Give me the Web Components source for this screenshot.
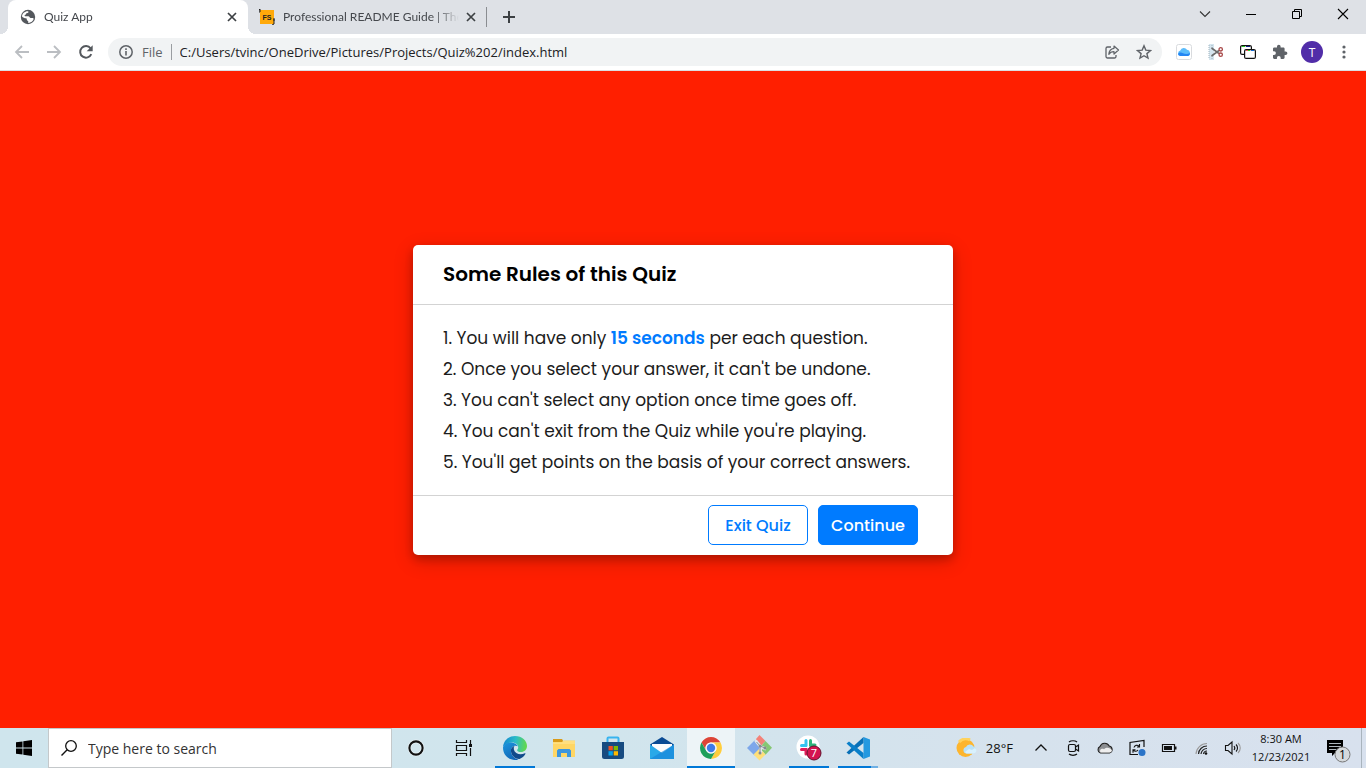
<!DOCTYPE html>
<html lang="en">
<head>
<meta charset="utf-8">
<title>Quiz App</title>
<style>
  html, body { margin: 0; height: 100%; }
  body { font-family: "Open Sans", "Noto Sans", sans-serif; font-size: 12px; color: #202124; }
</style>
</head>
<body>
<desktop-screen>
  <tab-strip slot="top">
    <browser-tab active label="Quiz App"><ui-icon slot="icon" name="globe"></ui-icon></browser-tab>
    <browser-tab label="Professional README Guide | The"><ui-icon slot="icon" name="fs"></ui-icon></browser-tab>
  </tab-strip>
  <browser-toolbar slot="top" url="C:/Users/tvinc/OneDrive/Pictures/Projects/Quiz%202/index.html"></browser-toolbar>
  <rules-dialog heading="Some Rules of this Quiz">
    <rule-line>1. You will have only <strong>15 seconds</strong> per each question.</rule-line>
    <rule-line>2. Once you select your answer, it can't be undone.</rule-line>
    <rule-line>3. You can't select any option once time goes off.</rule-line>
    <rule-line>4. You can't exit from the Quiz while you're playing.</rule-line>
    <rule-line>5. You'll get points on the basis of your correct answers.</rule-line>
    <quiz-button slot="actions">Exit Quiz</quiz-button>
    <quiz-button slot="actions" primary>Continue</quiz-button>
  </rules-dialog>
  <task-bar slot="bottom"></task-bar>
</desktop-screen>

<script>
const svg = (w, h, body, attrs = '') =>
  `<svg width="${w}" height="${h}" viewBox="0 0 ${w} ${h}" fill="none" aria-hidden="true" ${attrs}>${body}</svg>`;

const ICONS = {
  globe: svg(16, 16, '<circle cx="8" cy="8" r="7.2" fill="#54585d"/><path d="M8.2 2.2C9 3.600 7.700 4 6.500 4.300 5.900 4.500 6.400 5.600 5.200 5.800 4.300 6 4.500 7.200 5.200 7.300H8.300C9.600 7.300 9.300 8.900 10.500 8.900H12.800C14 8.900 13.700 10.500 12.700 11.800 11.500 13.300 9.600 14 8.100 13.900 8.900 12.700 8 12 7.300 11.500 6.300 10.800 7.300 9.500 6 9.300 4.700 9.200 2.800 8.600 2 7.500 2.100 4.500 4.800 2 8.200 2.200Z" fill="#fff"/>'),
  fs: svg(16, 16, '<path d="M1 1h14v14H1z" fill="#ffa90a"/><path d="M1 0v3M1 0l-1 1v3M15 10v5l-2 1M15 9v3" stroke="#222"/><text x="8" y="11" font-family="Liberation Sans" font-size="7" font-weight="700" text-anchor="middle" fill="#222">FS</text>'),
  close: svg(16, 16, '<path d="M4 4l8 8M12 4l-8 8" stroke="#3c4043" stroke-width="1.700"/>'),
  plus: svg(16, 16, '<path d="M8 2v12M2 8h12" stroke="#3c4043" stroke-width="2"/>'),
  down: svg(16, 16, '<path d="M3 5.500l5 5 5-5" stroke="#333" stroke-width="1.100"/>'),
  min: svg(16, 16, '<path d="M3 8.500h10" stroke="#000"/>'),
  restore: svg(16, 16, '<path d="M3.500 5.500h7v7h-7zM5.500 5.500v-2h7v7h-2" stroke="#000"/>'),
  exit: svg(16, 16, '<path d="M3 3l10 10M13 3L3 13" stroke="#000" stroke-width="1.100"/>'),
  back: svg(16, 16, '<path d="M15 8H2.500M8 2L2 8l6 6" stroke="#bbbec2" stroke-width="1.800"/>'),
  forward: svg(16, 16, '<path d="M1 8h12.500M8 2l6 6-6 6" stroke="#bbbec2" stroke-width="1.800"/>'),
  reload: svg(16, 16, '<path d="M13.300 10.200A5.800 5.800 0 1 1 12.600 4.300" stroke="#54585d" stroke-width="2"/><path d="M14.700 1.300v6H8.700z" fill="#54585d"/>'),
  info: svg(16, 16, '<circle cx="8" cy="8" r="6.200" stroke="#5f6368" stroke-width="1.500"/><path d="M8 7v4.500M8 4.300v1.600" stroke="#5f6368" stroke-width="1.600"/>'),
  share: svg(16, 16, '<path d="M7 3H3.500a1.500 1.500 0 0 0-1.500 1.500v8A1.500 1.500 0 0 0 3.500 14h7a1.500 1.500 0 0 0 1.500-1.500V11" stroke="#5f6368" stroke-width="1.300"/><path d="M10 2l4.500 4L10 10V7.700C7.500 7.700 6 8.500 4.800 10.300 5 7 6.800 4.700 10 4.300z" stroke="#5f6368" stroke-width="1.200" stroke-linejoin="round"/>'),
  star: svg(16, 16, '<path d="M8 1.800l1.800 4.300 4.700.4-3.600 3.100 1.100 4.500L8 11.700l-4 2.400 1.100-4.500L1.500 6.500l4.700-.4z" stroke="#5f6368" stroke-width="1.400"/>'),
  cloud: svg(16, 16, '<rect x=".5" y=".5" width="15" height="15" rx="2" fill="#fff" stroke="#d9dbde"/><path d="M4.500 12a2.800 2.800 0 0 1-.2-5.500A3.800 3.800 0 0 1 11 5.800a3.200 3.200 0 0 1 .9 6.200z" fill="#5bbcfb"/><path d="M2 10c1-1.500 3-1.800 5-.8 2 1 4.500 1.300 7-.2 0 1.800-1 3-2.200 3H4.500C3.200 12 2.200 11.200 2 10z" fill="#2486f3"/>'),
  scissors: svg(16, 16, '<path d="M1 0h5v16H1z" fill="#d5e5ee"/><path d="M1 1v14M4 1v3M4 12v3" stroke="#9fb3be" stroke-dasharray="1 1"/><path d="M3.500 4L11 9.500M3.500 12L11 6.500" stroke="#6b6b6b" stroke-width="1.600"/><circle cx="12.700" cy="5.300" r="1.700" stroke="#a84747" stroke-width="1.300"/><circle cx="12.700" cy="10.700" r="1.700" stroke="#a84747" stroke-width="1.300"/>'),
  windows2: svg(16, 16, '<rect x=".6" y="1.600" width="10.800" height="8.800" rx="1.500" fill="#fff" stroke="#111" stroke-width="1.200"/><path d="M2 2.500h3" stroke="#2c2"/><path d="M6 2.500h4" stroke="#128"/><rect x="4.600" y="5.600" width="10.800" height="8.800" rx="1.500" fill="#fff" stroke="#111" stroke-width="1.200"/><path d="M6 6.500h2" stroke="#e55"/><path d="M8 6.500h2" stroke="#2c2"/><path d="M11 6.500h3" stroke="#16c"/>'),
  puzzle: svg(16, 16, '<path d="M13.600 7.500h-1V4.700c0-.8-.6-1.300-1.300-1.300H8.600V2.600a1.800 1.800 0 0 0-3.600 0v.8H2.300C1.500 3.400 1 4 1 4.700v2.500h1a1.900 1.900 0 0 1 0 3.800H1v2.600c0 .8.600 1.400 1.300 1.400h2.600v-1a1.900 1.900 0 0 1 3.800 0v1h2.600c.7 0 1.300-.6 1.300-1.400v-2.500h1a1.800 1.800 0 0 0 0-3.600z" fill="#5f6368"/>'),
  dots: svg(16, 16, '<g fill="#5f6368"><circle cx="8" cy="3" r="1.600"/><circle cx="8" cy="8" r="1.600"/><circle cx="8" cy="13" r="1.600"/></g>'),
  start: svg(16, 16, '<path d="M0 2.300L6.500 1.400v6.100H0zM7.300 1.300L16 0v7.500H7.300zM0 8.400h6.500v6.200L0 13.700zM7.300 8.400H16V16l-8.700-1.300z" fill="#000"/>'),
  search: svg(18, 18, '<circle cx="11" cy="7" r="5.300" stroke="#111" stroke-width="1.300"/><path d="M7.200 10.800L1.500 16.500" stroke="#111" stroke-width="1.400"/>'),
  cortana: svg(18, 18, '<circle cx="9" cy="9" r="6.600" stroke="#fff" stroke-width="3.600" opacity=".5"/><circle cx="9" cy="9" r="6.600" stroke="#111" stroke-width="2.100"/>'),
  taskview: svg(18, 18, '<path d="M1.500 1v2.500h10V1M1.500 17v-2.500h10V17M1.500 6.500h10v5h-10zM15.500 1v4M15.500 9v8" stroke="#111" stroke-width="1.200"/><path d="M14 5h3v3h-3z" fill="#111"/>'),
  edge: svg(24, 24, '<defs><linearGradient id="a" x1="1" y1="7" x2="23" y2="10" gradientUnits="userSpaceOnUse"><stop stop-color="#168ccf"/><stop offset=".5" stop-color="#2bbcc8"/><stop offset="1" stop-color="#62d84e"/></linearGradient><linearGradient id="b" x1="3" y1="8" x2="12" y2="24" gradientUnits="userSpaceOnUse"><stop stop-color="#1a8fd8"/><stop offset="1" stop-color="#1164b4"/></linearGradient></defs><path d="M0 11C.6 4.500 5.800 0 12 0c7 0 12 4.700 12 10 0 3.800-2.800 6-6 6-2.600 0-4-.9-3.800-2 .2-.7 1-1.200 1-2.600C15.200 9 13 6.500 9 6.500 4.500 6.500 1 8.700 0 11z" fill="url(#a)"/><path d="M0 11.500C.7 8.500 4.500 6.300 8.500 6.500c3.200.2 5.500 1.800 6.400 3.800-1-.6-2.200-.8-3.400-.5C9 10.500 8 12.700 8 14.700c0 4.500 3.500 7.900 7.500 8.700-1.100.4-2.300.6-3.500.6C5 24 0 18.500 0 11.500z" fill="url(#b)"/><path d="M11.500 9.800C9 10.600 7.600 13 8 15.500c.5 4.300 4.500 7.800 8.500 7.500 2.600-1 4.700-2.800 6-5.200.2-.5-.2-.8-.7-.5-2.800 1.400-6 1.400-8.500-.3-2.600-1.800-3.300-5-1.800-7.200z" fill="#114a8b"/>'),
  explorer: svg(22, 20, '<path d="M0 1h9l1 1.500V5H0z" fill="#d99a18"/><path d="M0 4h9l1.500-1.500H22V19H0z" fill="#ffd664"/><path d="M0 4.500h9L10.500 3H22v3H0z" fill="#ffdf80"/><path d="M4 19v-6.500L5.500 11h11l1.500 1.500V19h-4v-4H8v4z" fill="#3d96dd"/>'),
  store: svg(24, 24, '<path d="M6.500 7V2.500a1 1 0 0 1 1-1h9a1 1 0 0 1 1 1V7" stroke="#38b4ef" stroke-width="2"/><path d="M1 6h22v14.500a2.500 2.500 0 0 1-2.500 2.500h-17A2.500 2.500 0 0 1 1 20.500z" fill="#174b80"/><path d="M7.500 10h4.300v4.300H7.500z" fill="#f25022"/><path d="M12.700 10H17v4.300h-4.300z" fill="#7fba00"/><path d="M7.500 15.200h4.300v4.300H7.500z" fill="#00a4ef"/><path d="M12.700 15.200H17v4.300h-4.300z" fill="#ffb900"/>'),
  mail: svg(24, 24, '<path d="M0 8.500L12 1l12 7.500L22 11H2z" fill="#0a4b94"/><path d="M2 8h20v8H2z" fill="#fbfcfd"/><path d="M0 8.500l12 8.500 12-8.500V23H0z" fill="#2aa9e8"/><path d="M0 23L24 8.500V23z" fill="#1784d8" opacity=".65"/>'),
  chrome: svg(24, 24, '<circle cx="12" cy="12" r="11" fill="#fff"/><path d="M2.500 6.500A11 11 0 0 1 21.500 6.500H12A5.500 5.500 0 0 0 7.200 14.700z" fill="#dc4437"/><path d="M21.500 6.500A11 11 0 0 1 12 23l4.800-8.300A5.500 5.500 0 0 0 12 6.500z" fill="#fecd3e"/><path d="M12 23A11 11 0 0 1 2.500 6.500l4.700 8.200a5.500 5.500 0 0 0 9.600 0z" fill="#1e9f5b"/><circle cx="12" cy="12" r="5.500" fill="#f4f6fa"/><circle cx="12" cy="12" r="4.200" fill="#3f7be8"/>'),
  git: svg(26, 26, '<path d="M12.500 0l6 6-6 6.500L9 9V4z" fill="#f48178"/><path d="M0 13l7.500-7.500L14 12.500 7.500 20.500z" fill="#7da7ea"/><path d="M18.500 6l6.500 6.700-6.500 7-6-7z" fill="#86c774"/><path d="M12.500 13.500l6 6-6 6-6-6z" fill="#ffdf78"/><path d="M8.500 5.500l5 6v7M14 12l5 2" stroke="#dfe6eb" stroke-width="3"/><path d="M9.500 7l3.500 4v7M13 11l5 2" stroke="#8b9197"/><g fill="#858a90"><circle cx="13" cy="11" r="1.500"/><circle cx="13" cy="18" r="1.500"/><circle cx="18" cy="13" r="1.500"/></g>'),
  slack: svg(26, 26, '<circle cx="12" cy="12" r="11.500" fill="#fff"/><g stroke-width="3" stroke-linecap="round"><path d="M10 5.500v5" stroke="#36c5f0"/><path d="M5.500 10.500h4" stroke="#36c5f0"/><path d="M14.500 5.500v5" stroke="#2eb67d"/><path d="M15 10h4" stroke="#2eb67d"/><path d="M5.500 14.500h4.500V19" stroke="#e01e5a"/><path d="M14.500 15v3.500" stroke="#ecb22e"/></g><circle cx="18" cy="18" r="7" fill="#d4144f" stroke="#63102b"/><text x="18" y="22" font-family="Open Sans" font-size="11" text-anchor="middle" fill="#fff">7</text>'),
  vscode: svg(24, 24, '<path d="M17.500 1L24 3.500v17L17.500 23z" fill="#2499e0"/><path d="M17.500 1v6L3 18.500.5 16.500z" fill="#0870b7"/><path d="M17.500 23v-6L3 5.500.5 7.500z" fill="#0a7fc9"/>'),
  weather: svg(22, 20, '<circle cx="9.500" cy="10" r="9" fill="#fdb52d"/><path d="M3 4a9 9 0 0 1 11-2" stroke="#ffd25d" stroke-width="3"/><path d="M10.500 15.500a3.300 3.300 0 0 1-.5-6.500 4.200 4.200 0 0 1 7.500-.5 3.600 3.600 0 0 1 0 7z" fill="#b9e2f8"/><path d="M9 14l4-3 3 1 3-2 1.500 2a3.600 3.600 0 0 1-3 3.500h-7z" fill="#d9f1fd"/>'),
  up: svg(16, 16, '<path d="M2.500 10.500L8 5l5.500 5.500" stroke="#111" stroke-width="1.300"/>'),
  meet: svg(16, 18, '<rect x="3.500" y="5.500" width="7" height="7" rx="1.500" stroke="#111" stroke-width="1.200"/><path d="M10.500 8l3-2v6l-3-2M4 3c2-1.700 6-1.700 8 0M4 15c2 1.700 6 1.700 8 0" stroke="#111" stroke-width="1.200"/>'),
  onedrive: svg(18, 16, '<path d="M4.500 13a3.500 3.500 0 0 1-.5-6.500A5 5 0 0 1 13.200 6 3.600 3.600 0 0 1 13.500 13z" fill="#8c8e91" stroke="#222" stroke-width="1.100"/><path d="M4.500 12.500C3 9.500 6 7.800 8 9.200c3-2.600 6.500-1 8 1.300-.4 1.300-1 2-2.500 2z" fill="#eee"/>'),
  sync: svg(18, 18, '<path d="M16 8V1.500L2 3.500v12h8" stroke="#111" stroke-width="1.200"/><path d="M6 8.500c.5-2.300 3.500-3 5-1.200M11.500 5v3h-2.500M10 11c-1 1.500-3 1.800-4.500.3M5 13.800v-3h2.500" stroke="#111" stroke-width="1.100"/><circle cx="14" cy="13.500" r="3.500" fill="#2b74c8"/>'),
  battery: svg(16, 16, '<path d="M1.500 4.500h12v7h-12z" stroke="#111" stroke-width="1.200"/><path d="M3 6h8v4H3zM14 6.500h1.500v3H14z" fill="#111"/>'),
  wifi: svg(16, 16, '<path d="M3 14A11 11 0 0 1 14 3.500" stroke="#999" stroke-width="1.100"/><path d="M5.500 14A8.500 8.500 0 0 1 14 6M8 14a6 6 0 0 1 6-5.500M10.500 14A3.500 3.500 0 0 1 14 11" stroke="#222" stroke-width="1.200"/><circle cx="13" cy="13.500" r="1.300" fill="#111"/>'),
  sound: svg(18, 16, '<path d="M1.500 5.500h2.500l4-3.500v12L4 10.500H1.500z" stroke="#111" stroke-width="1.100"/><path d="M10 6c1 1.200 1 2.800 0 4M12 4.500c2 2 2 5 0 7" stroke="#111" stroke-width="1.100"/><path d="M14 3c3 3 3 7 0 10" stroke="#999" stroke-width="1.100"/>'),
  notice: svg(28, 30, '<path d="M4 7h16v13h-8l-3 3v-3H4z" fill="#000"/><path d="M6 10.500h12M6 13.500h12M6 16.500h7" stroke="#dbe5ee" stroke-width=".8"/><circle cx="19.500" cy="21.500" r="7.500" fill="#d5d9dc" stroke="#777"/><text x="19.500" y="26" font-family="Open Sans" font-size="12" text-anchor="middle" fill="#000">1</text>')
};

const define = (name, html, setup) => {
  const template = document.createElement('template');
  template.innerHTML = html;
  customElements.define(name, class extends HTMLElement {
    constructor() {
      super();
      this.attachShadow({ mode: 'open' }).append(template.content.cloneNode(true));
    }
    connectedCallback() { if (setup) setup(this, this.shadowRoot); }
  });
};

define('ui-icon', `<style>:host { display: inline-flex; flex: none; } svg { display: block; }</style><span></span>`,
  (el, root) => { root.querySelector('span').innerHTML = ICONS[el.getAttribute('name')] || ''; });

define('icon-button', `
  <style>
    :host { display: flex; flex: none; width: 32px; height: 32px; }
    button { all: unset; flex: 1; display: flex; align-items: center; justify-content: center; }
  </style>
  <button type="button"><slot></slot></button>`,
  (el, root) => root.querySelector('button').setAttribute('aria-label', el.getAttribute('label') || ''));

define('desktop-screen', `
  <style>
    :host { display: flex; flex-direction: column; min-height: 100vh; background: #ff1f00; }
    header, footer { flex: none; }
    main { flex: 1; display: flex; align-items: center; justify-content: center; }
  </style>
  <header><slot name="top"></slot></header>
  <main><slot></slot></main>
  <footer><slot name="bottom"></slot></footer>`);

define('browser-tab', `
  <style>
    :host { display: flex; align-items: center; box-sizing: border-box; flex: 0 1 240px; min-width: 0; height: 34px; padding: 0 9px 0 11px; gap: 8px; color: #45484d; font-family: Lato, "Open Sans", sans-serif; }
    :host([active]) { position: relative; background: #fff; border-radius: 8px 8px 0 0; padding: 0 8px 0 12px; }
    :host([active])::before, :host([active])::after { content: ""; position: absolute; bottom: 0; width: 8px; height: 8px; }
    :host([active])::before { left: -8px; background: radial-gradient(circle at 0 0, #dee1e6 8px, #fff 8px); }
    :host([active])::after { right: -8px; background: radial-gradient(circle at 100% 0, #dee1e6 8px, #fff 8px); }
    span { flex: 1; overflow: hidden; white-space: nowrap; line-height: 20px; -webkit-mask-image: linear-gradient(to left, transparent, #000 24px); mask-image: linear-gradient(to left, transparent, #000 24px); }
    icon-button { width: 16px; height: 16px; }
    :host(:not([active])) span { margin-right: -4px; }
  </style>
  <slot name="icon"></slot><span></span>
  <icon-button label="Close tab"><ui-icon name="close"></ui-icon></icon-button>`,
  (el, root) => { root.querySelector('span').textContent = el.getAttribute('label'); });

define('tab-strip', `
  <style>
    :host { display: flex; height: 34px; padding-left: 8px; background: #dee1e6; }
    .new { display: flex; align-items: center; align-self: center; height: 20px; padding-left: 6px; margin-left: -2px; border-left: 1px solid #8a8d91; }
    .window { display: flex; margin-left: auto; }
    .window icon-button { width: 46px; height: 28px; }
  </style>
  <slot></slot>
  <div class="new"><icon-button label="New tab"><ui-icon name="plus"></ui-icon></icon-button></div>
  <div class="window">
    <icon-button label="Search tabs"><ui-icon name="down"></ui-icon></icon-button>
    <icon-button label="Minimize"><ui-icon name="min"></ui-icon></icon-button>
    <icon-button label="Restore"><ui-icon name="restore"></ui-icon></icon-button>
    <icon-button label="Close"><ui-icon name="exit"></ui-icon></icon-button>
  </div>`);

define('browser-toolbar', `
  <style>
    :host { display: flex; align-items: center; height: 36px; padding: 0 6px; background: #fff; border-bottom: 1px solid #dcdee1; }
    .address { flex: 1; display: flex; align-items: center; height: 28px; margin: 0 6px; padding: 0 2px 0 10px; border-radius: 14px; background: #f1f3f4; }
    label { display: flex; align-items: center; gap: 8px; font-size: 13px; line-height: 16px; color: #5f6368; }
    label::after { content: ""; width: 1px; height: 16px; background: #9a9da1; }
    input { flex: 1; min-width: 0; margin: 0; padding: 0 0 0 8px; border: 0; outline: 0; background: none; font: inherit; font-size: 13px; color: #202124; }
    .avatar { display: flex; align-items: center; justify-content: center; width: 22px; height: 22px; border-radius: 50%; background: #512da8; color: #fff; font-size: 12px; }
  </style>
  <icon-button label="Back"><ui-icon name="back"></ui-icon></icon-button>
  <icon-button label="Forward"><ui-icon name="forward"></ui-icon></icon-button>
  <icon-button label="Reload"><ui-icon name="reload"></ui-icon></icon-button>
  <div class="address">
    <label for="url"><ui-icon name="info"></ui-icon>File</label>
    <input id="url" type="text" spellcheck="false">
    <icon-button label="Share"><ui-icon name="share"></ui-icon></icon-button>
    <icon-button label="Bookmark"><ui-icon name="star"></ui-icon></icon-button>
  </div>
  <icon-button label="iCloud"><ui-icon name="cloud"></ui-icon></icon-button>
  <icon-button label="Clipper"><ui-icon name="scissors"></ui-icon></icon-button>
  <icon-button label="Windows"><ui-icon name="windows2"></ui-icon></icon-button>
  <icon-button label="Extensions"><ui-icon name="puzzle"></ui-icon></icon-button>
  <icon-button label="Profile"><span class="avatar">T</span></icon-button>
  <icon-button label="Menu"><ui-icon name="dots"></ui-icon></icon-button>`,
  (el, root) => { root.querySelector('input').value = el.getAttribute('url'); });

define('rule-line', `
  <style>
    :host { display: block; line-height: 31px; }
    ::slotted(strong) { font-weight: 600; color: #007bff; }
  </style>
  <slot></slot>`);

define('quiz-button', `
  <style>
    :host { display: flex; }
    button { width: 100px; height: 40px; padding: 0; border: 1px solid #007bff; border-radius: 5px; background: #fff; color: #007bff; font: inherit; font-size: 16px; font-weight: 500; white-space: nowrap; }
    :host([primary]) button { background: #007bff; color: #fff; }
  </style>
  <button type="button"><slot></slot></button>`);

define('rules-dialog', `
  <style>
    :host { display: block; width: 540px; max-width: 100%; border-radius: 5px; background: #fff; font-family: Poppins, Inter, sans-serif; font-size: 17px; color: #1c1c1c; box-shadow: 0 4px 8px rgba(0,0,0,.2), 0 6px 20px rgba(0,0,0,.19); }
    h1 { margin: 0; padding: 0 30px; border-bottom: 1px solid #d3d3d3; font-size: 20px; font-weight: 600; line-height: 59px; color: #000; }
    .rules { padding: 18px 30px 17px; }
    footer { display: flex; align-items: center; justify-content: flex-end; gap: 10px; height: 59px; padding: 0 35px; border-top: 1px solid #d3d3d3; }
  </style>
  <section aria-labelledby="title">
    <h1 id="title"></h1>
    <div class="rules"><slot></slot></div>
    <footer><slot name="actions"></slot></footer>
  </section>`,
  (el, root) => { root.querySelector('h1').textContent = el.getAttribute('heading'); });

define('task-button', `
  <style>
    :host { display: flex; flex: none; box-sizing: border-box; width: 48px; height: 40px; position: relative; }
    :host([current]) { background: #edf4f7; }
    button { all: unset; flex: 1; display: flex; align-items: center; justify-content: center; }
    :host([open])::after, :host([current])::after { content: ""; position: absolute; left: 4px; right: 4px; bottom: 0; height: 2px; background: #0078d7; }
    :host([current])::after { left: 0; right: 0; }
    :host([stacked])::after { background: linear-gradient(to left, #6fb0e4 7px, #0078d7 7px); }
  </style>
  <button type="button"><slot></slot></button>`,
  (el, root) => root.querySelector('button').setAttribute('aria-label', el.getAttribute('label')));

define('task-bar', `
  <style>
    :host { display: flex; height: 40px; background: linear-gradient(90deg, #cfe5ed, #d1e5ed 45%, #d6e2ed 75%, #d8e1ee); color: #111; }
    .search { box-sizing: border-box; display: flex; align-items: center; gap: 10px; flex: 0 1 344px; padding-left: 11px; background: #fff; border: 1px solid #c4c8ca; }
    .search label { display: flex; }
    input { flex: 1; min-width: 0; padding: 0; border: 0; outline: 0; background: none; font: inherit; font-size: 14px; }
    input::placeholder { color: #333; opacity: 1; }
    .apps { display: flex; gap: 1px; margin-left: 3px; }
    .tray { display: flex; align-items: center; margin-left: auto; }
    .weather { display: flex; align-items: center; gap: 8px; margin-right: 12px; font-size: 13px; }
    .clock { width: 64px; text-align: center; font-size: 11px; line-height: 18px; }
    .notice { width: 48px; }
    .edge { width: 4px; height: 40px; border-left: 1px solid #a9b4bd; }
  </style>
  <task-button label="Start"><ui-icon name="start"></ui-icon></task-button>
  <div class="search">
    <label for="find" aria-label="Search"><ui-icon name="search"></ui-icon></label>
    <input id="find" type="text" placeholder="Type here to search">
  </div>
  <task-button label="Cortana"><ui-icon name="cortana"></ui-icon></task-button>
  <task-button label="Task View"><ui-icon name="taskview"></ui-icon></task-button>
  <div class="apps">
    <task-button open label="Edge"><ui-icon name="edge"></ui-icon></task-button>
    <task-button label="File Explorer"><ui-icon name="explorer"></ui-icon></task-button>
    <task-button label="Store"><ui-icon name="store"></ui-icon></task-button>
    <task-button label="Mail"><ui-icon name="mail"></ui-icon></task-button>
    <task-button current label="Chrome"><ui-icon name="chrome"></ui-icon></task-button>
    <task-button label="Git"><ui-icon name="git"></ui-icon></task-button>
    <task-button open label="Slack"><ui-icon name="slack"></ui-icon></task-button>
    <task-button open stacked label="Visual Studio Code"><ui-icon name="vscode"></ui-icon></task-button>
  </div>
  <div class="tray">
    <div class="weather"><ui-icon name="weather"></ui-icon><span>28°F</span></div>
    <icon-button label="Show hidden icons"><ui-icon name="up"></ui-icon></icon-button>
    <icon-button label="Meet Now"><ui-icon name="meet"></ui-icon></icon-button>
    <icon-button label="OneDrive"><ui-icon name="onedrive"></ui-icon></icon-button>
    <icon-button label="Updates"><ui-icon name="sync"></ui-icon></icon-button>
    <icon-button label="Battery"><ui-icon name="battery"></ui-icon></icon-button>
    <icon-button label="Network"><ui-icon name="wifi"></ui-icon></icon-button>
    <icon-button label="Volume"><ui-icon name="sound"></ui-icon></icon-button>
    <div class="clock">8:30 AM<br>12/23/2021</div>
    <icon-button class="notice" label="Notifications"><ui-icon name="notice"></ui-icon></icon-button>
    <div class="edge"></div>
  </div>`);
</script>
</body>
</html>
